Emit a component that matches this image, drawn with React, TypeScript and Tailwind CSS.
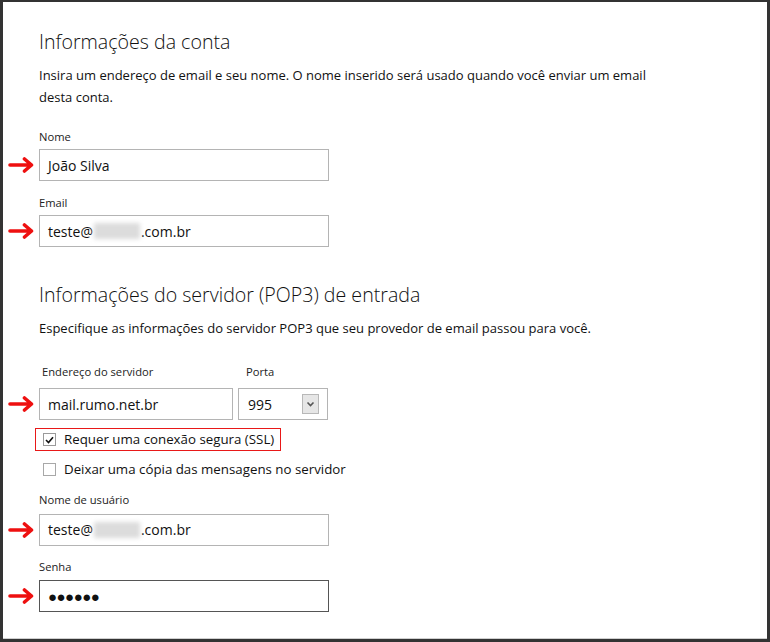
import React from "react";

const Arrow = () => (
  <svg width="27" height="16" viewBox="0 0 27 16">
    <path
      d="M2 8H23.5M16.5 2L23.5 8L16.5 14"
      stroke="#ee1010"
      strokeWidth="3.6"
      fill="none"
      strokeLinecap="round"
      strokeLinejoin="round"
    />
  </svg>
);

const Blur = () => (
  <span className="inline-block w-[46px] h-[16px] bg-[#dcdcdc] blur-[2px] align-middle mx-[1px]" />
);

function ArrowRow({ children, arrow = true }: { children: React.ReactNode; arrow?: boolean }) {
  return (
    <div className="flex items-center">
      <div className="w-9 pl-[5px] flex items-center">{arrow ? <Arrow /> : null}</div>
      {children}
    </div>
  );
}

function Label({ children, className = "" }: { children: React.ReactNode; className?: string }) {
  return <div className={`text-[11.2px] leading-4 text-[#222] ${className}`}>{children}</div>;
}

function Box({ children, w = "w-[290px]", dark = false }: { children: React.ReactNode; w?: string; dark?: boolean }) {
  return (
    <div
      className={`${w} h-8 border ${dark ? "border-[#555]" : "border-[#b4b4b4]"} flex items-center pl-2 text-[14px] text-[#111] bg-white`}
    >
      {children}
    </div>
  );
}

export default function App() {
  return (
    <div
      className="w-[770px] h-[642px] bg-white border-l-[3px] border-t-2 border-r-[3px] border-b-[3px] border-[#333] overflow-hidden"
      style={{ fontFamily: '"Open Sans", "Noto Sans", sans-serif' }}
    >
      <div className="h-full border-b border-[#cfcfcf] pt-[26px]">
        <div className="pl-9">
          <h1 className="text-[19.6px] leading-7 font-light text-[#111]">Informações da conta</h1>
          <p className="mt-2 w-[640px] text-[13px] leading-[22px] text-[#111]">
            Insira um endereço de email e seu nome. O nome inserido será usado quando você enviar um email desta conta.
          </p>
          <Label className="mt-[21px]">Nome</Label>
        </div>
        <div className="mt-1">
          <ArrowRow>
            <Box>João Silva</Box>
          </ArrowRow>
        </div>
        <div className="pl-9 mt-[14px]">
          <Label>Email</Label>
        </div>
        <div className="mt-1">
          <ArrowRow>
            <Box>
              teste@<Blur />.com.br
            </Box>
          </ArrowRow>
        </div>
        <div className="pl-9 mt-[34px]">
          <h2 className="text-[19.6px] leading-7 font-light text-[#111]">Informações do servidor (POP3) de entrada</h2>
          <p className="mt-2 text-[13px] leading-[22px] text-[#111]">
            Especifique as informações do servidor POP3 que seu provedor de email passou para você.
          </p>
          <div className="mt-[25px] flex text-[11.2px] leading-4 text-[#222]">
            <div className="w-[207px] pl-[3px]">Endereço do servidor</div>
            <div>Porta</div>
          </div>
        </div>
        <div className="mt-2">
          <ArrowRow>
            <div className="flex gap-[5px]">
              <Box w="w-[194px]">mail.rumo.net.br</Box>
              <div className="w-[90px] h-8 border border-[#b4b4b4] flex items-center justify-between pl-[9px] pr-[8px] text-[14px] text-[#111]">
                <span>995</span>
                <span className="w-[17px] h-[20px] bg-[#e6e6e6] border border-[#b8b8b8] flex items-center justify-center">
                  <svg width="9" height="6" viewBox="0 0 9 6">
                    <path d="M1.5 1.5L4.5 4.5L7.5 1.5" stroke="#555" strokeWidth="1.6" fill="none" />
                  </svg>
                </span>
              </div>
            </div>
          </ArrowRow>
        </div>
        <div className="pl-8 mt-2">
          <div className="w-[246px] h-[23px] border border-[#e81818] flex items-center pl-[7px] gap-2 text-[13.3px] text-[#111]">
            <span className="w-[13px] h-[13px] border border-[#9a9a9a] bg-white flex items-center justify-center">
              <svg width="9" height="8" viewBox="0 0 9 8">
                <path d="M1 4L3.5 6.5L8 1.2" stroke="#111" strokeWidth="1.6" fill="none" />
              </svg>
            </span>
            <span>Requer uma conexão segura (SSL)</span>
          </div>
          <div className="mt-[9px] pl-[8px] flex items-center gap-2 text-[13.3px] text-[#111]">
            <span className="w-[13px] h-[13px] border border-[#a8a8a8] bg-white" />
            <span>Deixar uma cópia das mensagens no servidor</span>
          </div>
        </div>
        <div className="pl-9 mt-[12px]">
          <Label>Nome de usuário</Label>
        </div>
        <div className="mt-[6px]">
          <ArrowRow>
            <Box>
              teste@<Blur />.com.br
            </Box>
          </ArrowRow>
        </div>
        <div className="pl-9 mt-[13px]">
          <Label>Senha</Label>
        </div>
        <div className="mt-[5px]">
          <ArrowRow>
            <Box dark>
              <span className="text-[15px] tracking-[-0.5px] text-[#111]">●●●●●●</span>
            </Box>
          </ArrowRow>
        </div>
      </div>
    </div>
  );
}
